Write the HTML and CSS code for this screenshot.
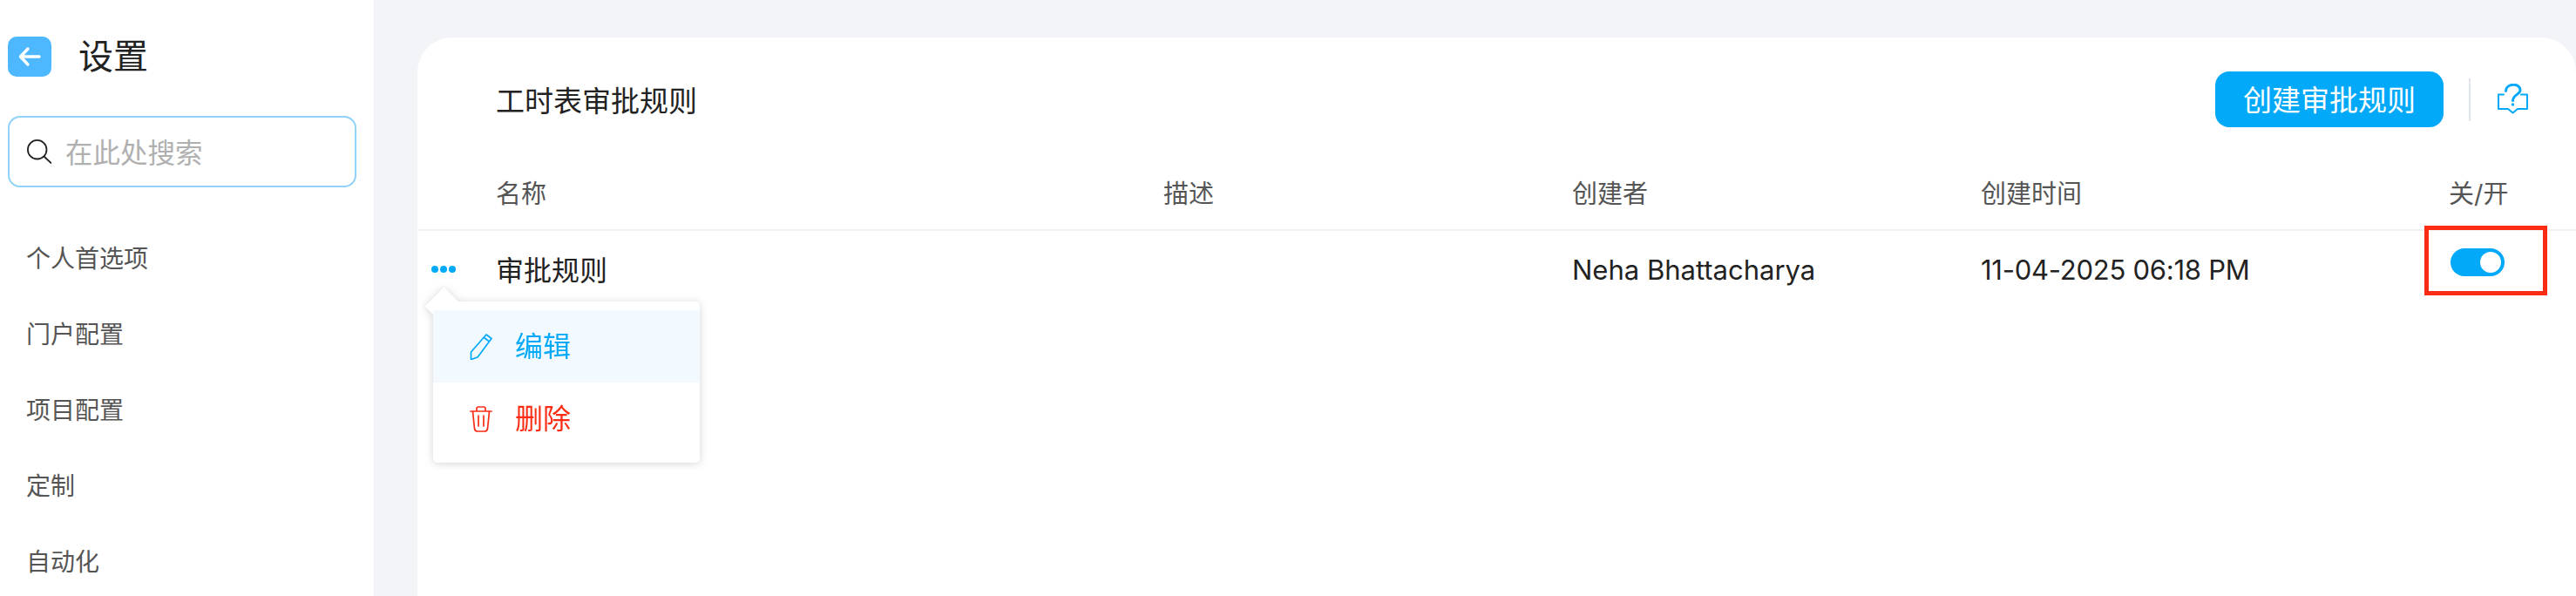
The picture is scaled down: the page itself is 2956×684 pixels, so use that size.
FILE: index.html
```html
<!DOCTYPE html>
<html lang="zh-CN">
<head>
  <meta charset="UTF-8" />
  <meta name="viewport" content="width=device-width, initial-scale=1.0"/>
  <title>工时表审批规则</title>
  <link rel="stylesheet" href="styles.css">
</head>
<body>

<div class="page">

  <!-- SIDEBAR -->
  <aside class="sidebar">
    <div class="side-head">
      <button class="back-btn">
        <svg width="26" height="24" viewBox="0 0 26 24" fill="none" stroke="#fff" stroke-width="3.4" stroke-linecap="round" stroke-linejoin="round">
          <path d="M11 3 L2.500 12 L11 21 M3 12 H24"/>
        </svg>
      </button>
      <h1>设置</h1>
    </div>
    <div class="search-box">
      <svg width="28" height="28" viewBox="0 0 28 28" fill="none" stroke="#222" stroke-width="1.800">
        <circle cx="11.700" cy="11.700" r="10.800"/>
        <path d="M19.500 19.500 L28 27.500"/>
      </svg>
      <span>在此处搜索</span>
    </div>
    <nav class="side-nav">
      <a>个人首选项</a>
      <a>门户配置</a>
      <a>项目配置</a>
      <a>定制</a>
      <a>自动化</a>
    </nav>
  </aside>

  <!-- MAIN CARD -->
  <main class="main">
    <div class="card">
      <div class="card-head">
        <h2>工时表审批规则</h2>
        <button class="create-btn"><span>创建审批规则</span></button>
        <span class="head-divider"></span>
        <svg class="help-icon" width="36" height="36" viewBox="0 0 36 36" fill="none" stroke="#03a9f9" stroke-width="2" stroke-linejoin="round" stroke-linecap="round">
          <path stroke-width="3" d="M9.500 8.500 C10 -1 26 -1 26 7.500 C26 12.500 17.500 12.500 17.500 19.500"/>
          <circle cx="17.500" cy="24" r="1.700" fill="#03a9f9" stroke="none"/>
          <path d="M7 12.500 H1 V29 H12 L17.500 33.500 L23 29 H34 V12.500 H27"/>
        </svg>
      </div>

      <div class="table-row table-head">
        <div></div>
        <div>名称</div>
        <div>描述</div>
        <div>创建者</div>
        <div>创建时间</div>
        <div>关/开</div>
      </div>

      <div class="table-row table-body">
        <div class="actions">
          <span class="dots"><i></i><i></i><i></i></span>
          <div class="menu">
            <div class="menu-item edit">
              <svg width="26" height="30" viewBox="0 0 26 30" fill="none" stroke="#03a9f9" stroke-width="1.700" stroke-linejoin="round">
                <path d="M19 1 L25 5.500 L9 27 L1.500 29.500 L1.500 21 Z M16.500 4.500 L22.500 9"/>
              </svg>
              <span>编辑</span>
            </div>
            <div class="menu-item delete">
              <svg width="26" height="30" viewBox="0 0 26 30" fill="none" stroke="#fb2c14" stroke-width="1.700" stroke-linejoin="round" stroke-linecap="round">
                <path d="M1 6 H25 M8 6 V3 Q8 1 10 1 H16 Q18 1 18 3 V6 M3.500 6 L5.500 26 Q6 29 9 29 H17 Q20 29 20.500 26 L22.500 6 M10 11 V23 M16 11 V23"/>
              </svg>
              <span>删除</span>
            </div>
          </div>
        </div>
        <div class="rule-name">审批规则</div>
        <div></div>
        <div class="owner">Neha Bhattacharya</div>
        <div class="created">11-04-2025 06:18 PM</div>
        <div class="toggle-cell">
          <span class="toggle"></span>
          <span class="red-box"></span>
        </div>
      </div>
    </div>
  </main>
</div>

</body>
</html>
```

FILE: styles.css
```css
* {
  box-sizing: border-box;
}

body {
  margin: 0;
  height: 684px;
  overflow: hidden;
  background: #f2f4f8;
  color: #222;
  font-family: Inter, "Noto Sans CJK SC", sans-serif;
}

.page {
  display: flex;
  height: 684px;
}

/* sidebar */
.sidebar {
  width: 429px;
  flex-shrink: 0;
  background: #fff;
  padding: 42px 0 0 9px;
}

.side-head {
  display: flex;
  align-items: center;
  gap: 31px;
}

.back-btn {
  width: 50px;
  height: 46px;
  padding: 0;
  border: none;
  border-radius: 10px;
  background: #4db8ff;
  display: flex;
  align-items: center;
  justify-content: center;
}

.side-head h1 {
  margin: 0;
  font-size: 40px;
  font-weight: 400;
  line-height: 46px;
}

.search-box {
  width: 400px;
  height: 82px;
  margin-top: 45px;
  padding-left: 20px;
  display: flex;
  align-items: center;
  gap: 16px;
  border: 2px solid #90d2fa;
  border-radius: 14px;
  font-size: 31.500px;
  color: #b0b0b0;
}

.search-box span {
  margin-top: -3px;
}

.side-nav {
  margin-top: 39px;
  padding-left: 21px;
}

.side-nav a {
  display: block;
  height: 87px;
  line-height: 87px;
  font-size: 28px;
  color: #555;
}

/* main card */
.main {
  flex: 1;
  padding: 43px 0 0 50px;
}

.card {
  height: 100%;
  background: #fff;
  border-radius: 40px 40px 0 0;
}

.card-head {
  display: flex;
  align-items: center;
  padding: 39px 54px 0 90px;
}

.card-head h2 {
  flex: 1;
  margin: 0;
  font-size: 33px;
  font-weight: 400;
}

.create-btn {
  width: 262px;
  height: 64px;
  border: none;
  border-radius: 16px;
  background: #03a9f9;
  color: #fff;
  font-family: inherit;
  font-size: 33px;
}

.create-btn span {
  position: relative;
  top: -1px;
}

.head-divider {
  width: 2px;
  height: 49px;
  margin: 0 31px 0 29px;
  background: #dfe5ea;
}

.table-row {
  display: grid;
  grid-template-columns: 90px 766px 469px 469px 537px 1fr;
  align-items: center;
}

.table-head {
  height: 87px;
  margin-top: 32px;
  padding-bottom: 2px;
  border-bottom: 2px solid #f1f1f1;
  font-size: 29px;
  color: #555;
}

.table-body {
  height: 88px;
  font-size: 31px;
}

.created {
  letter-spacing: -0.25px;
}

.rule-name {
  padding-bottom: 3px;
  font-size: 32px;
}

/* row actions */
.actions {
  position: relative;
  height: 100%;
  display: flex;
  align-items: center;
  padding-left: 16px;
}

.dots {
  display: flex;
  gap: 2px;
}

.dots i {
  width: 8px;
  height: 8px;
  border-radius: 50%;
  background: #03a9f9;
}

.menu {
  position: absolute;
  left: 18px;
  top: 81px;
  width: 306px;
  height: 185px;
  padding-top: 10px;
  background: #fff;
  border-radius: 5px;
  filter: drop-shadow(0 1px 5px rgba(0, 0, 0, 0.17));
  font-size: 32px;
}

/* little arrow pointing at the dots */
.menu::before {
  content: "";
  position: absolute;
  left: -3px;
  top: -10px;
  width: 31px;
  height: 31px;
  background: #fff;
  transform: rotate(45deg);
}

.menu-item {
  position: relative;
  height: 83px;
  padding-left: 42px;
  display: flex;
  align-items: center;
  gap: 26px;
}

.menu-item span {
  margin-top: -6px;
}

.menu-item.edit {
  background: #f2faff;
  color: #03a9f9;
}

.menu-item.delete {
  color: #fb2c14;
}

/* toggle + annotation box */
.toggle-cell {
  position: relative;
  height: 100%;
  display: flex;
  align-items: center;
  padding-left: 2px;
}

.toggle {
  position: relative;
  width: 62px;
  height: 32px;
  margin-top: -16px;
  border-radius: 16px;
  background: #03a9f9;
}

.toggle::after {
  content: "";
  position: absolute;
  right: 4px;
  top: 4px;
  width: 24px;
  height: 24px;
  border-radius: 50%;
  background: #fff;
}

.red-box {
  position: absolute;
  left: -28px;
  top: -6px;
  width: 141px;
  height: 80px;
  border: 5px solid #fb2c14;
}
```
